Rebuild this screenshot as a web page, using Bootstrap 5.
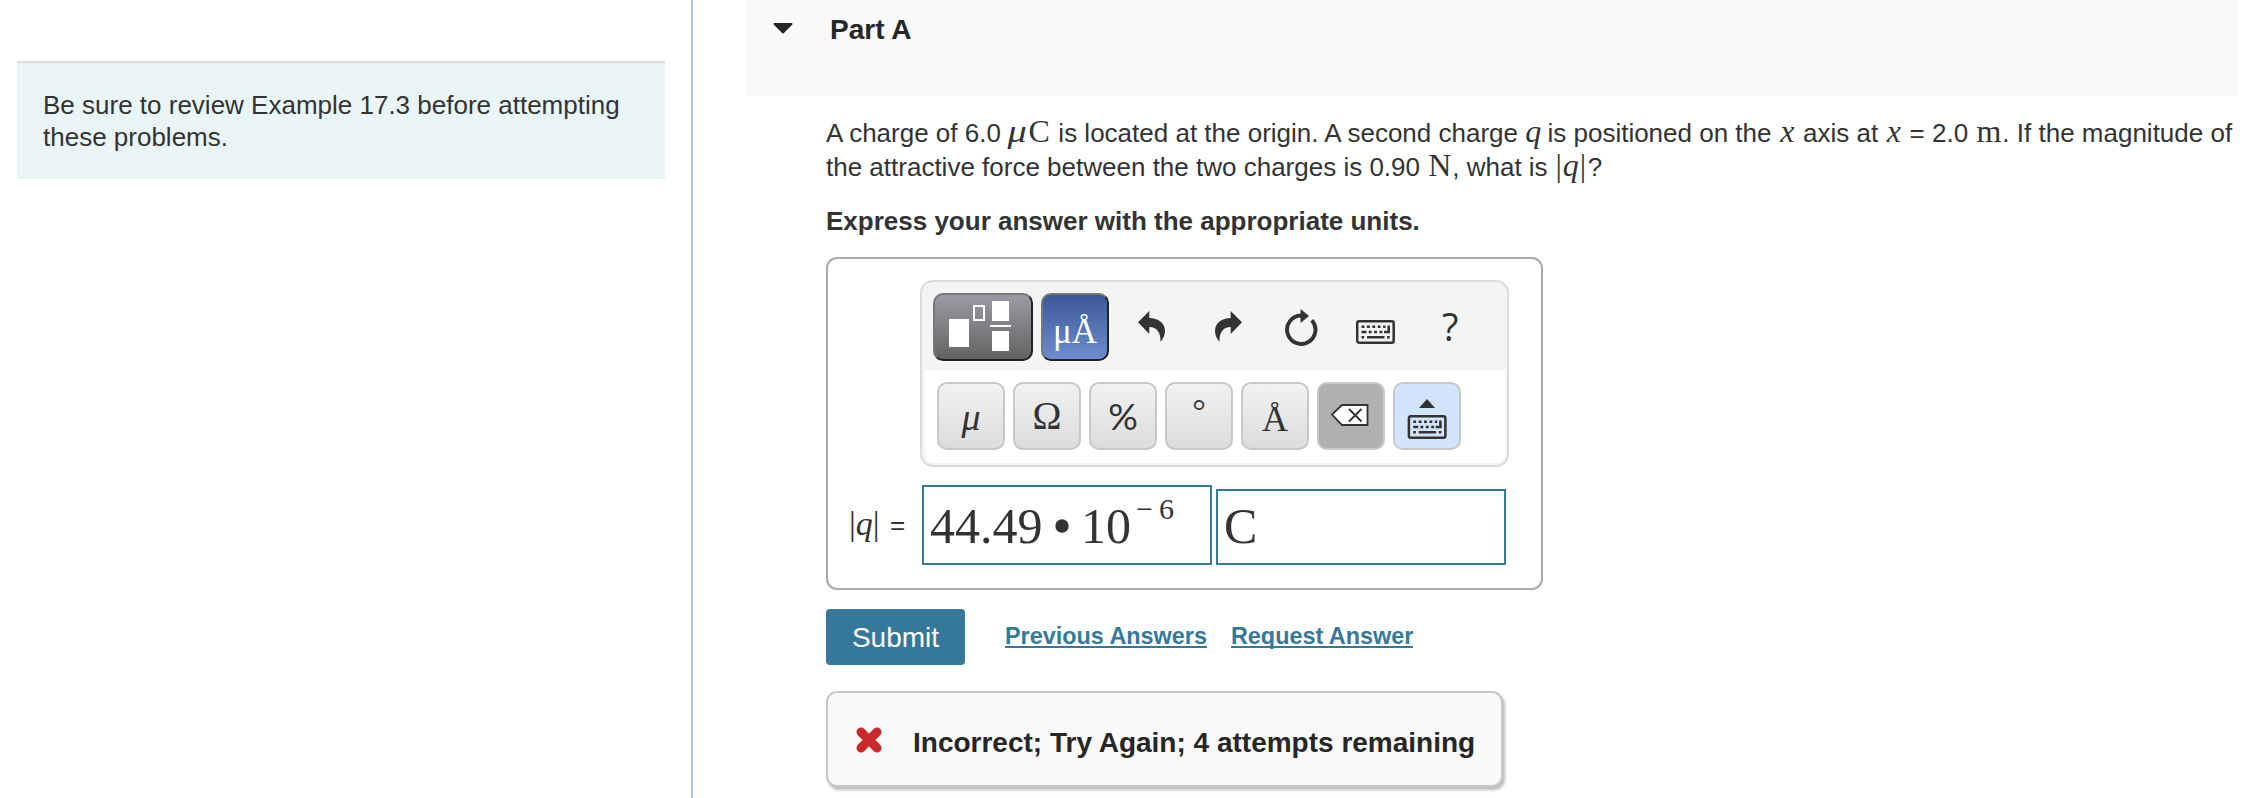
<!DOCTYPE html>
<html lang="en">
<head>
<meta charset="utf-8">
<title>Part A</title>
<link rel="stylesheet" href="https://cdn.jsdelivr.net/npm/bootstrap@5.3.0/dist/css/bootstrap.min.css">
<style>
body{font-family:"Liberation Sans",Arial,sans-serif;font-size:26px;color:#333;background:#fff}
.page{height:798px;overflow:hidden}
.side{width:693px;border-right:2px solid #b9c6d8;padding:61px 26px 0 17px}
.hint{background:#eaf5f8;border-top:2px solid #dedee2;padding:26px 20px 26px 26px;line-height:32px}
.main-col{padding:0 24px 0 52px;min-width:0}
.part-head{height:96px;background:#f9f9f9;padding:8px 0 0 28px;color:#262626}
.part-head h1{font-size:28px;line-height:26px;margin:9px 0 0 37px}
.content{padding:20px 0 0 81px}
.ask{line-height:34px;margin-bottom:20px}
.m{display:inline-block;font-family:"Liberation Serif",serif;font-size:32px;line-height:20px;text-align:center}
.m.i{font-style:italic}
.instr{line-height:34px;margin-bottom:19px}
.answer{width:717px;height:333px;border:2px solid #a9a9a9;border-radius:11px;padding:21px 32px 0 16px}
.pad{width:589px;height:187px;margin-left:76px;border:2px solid #dcdcdc;border-radius:13px;background:#f4f4f4;padding:0 2px 2px 3px}
.tools{height:88px;padding:11px 0 0 8px}
.keys{background:#fff;height:93px;border-radius:0 0 9px 9px;padding:12px 0 0 12px}
.key{width:68px;height:68px;border:2px solid #c8c8c8;border-radius:10px;background:linear-gradient(#f2f2f2,#dcdcdc);font-family:"Liberation Serif",serif;color:#333;padding:0}
.tmpl{width:100px;border-color:#777 #222 #222 #777;background:linear-gradient(#9b9aa4,#636363)}
.units{border-color:#777 #222 #222 #777;background:linear-gradient(#3b5797,#6f8dce);color:#fff}
.ico{height:68px}
.field{width:290px;border:2px solid #357a9c;font-family:"Liberation Serif",serif;font-size:50px;padding-left:6px;white-space:nowrap}
.lbl{width:77px;height:80px;line-height:80px;padding-left:5px}
.send{width:139px;height:56px;background:#36789a;color:#fff;border-radius:4px;font-size:28px;line-height:58px;padding:0;border:0}
.lk{font-size:23.4px;font-weight:700;color:#36789a;line-height:27px;text-decoration:none;border-bottom:2px solid #36789a;height:25px}
.fb{width:677px;height:96px;background:#f9f9f9;border:2px solid #c8c8c8;border-radius:11px;box-shadow:2px 3px 3px #bbb;margin-top:26px;padding-left:28px;color:#262626;font-size:28px}
</style>
<script src="https://cdn.jsdelivr.net/npm/bootstrap@5.3.0/dist/js/bootstrap.bundle.min.js"></script>
</head>
<body>
<svg width="0" height="0" class="position-absolute">
<defs>
<g id="kb"><rect x="1.200" y="1.200" width="36.500" height="21.500" rx="2" fill="none" stroke="#333" stroke-width="2.500"/>
<path fill="none" stroke="#333" stroke-width="2.500" stroke-dasharray="2.900 2.500" d="M5.500 6.800H29.500M12.700 12H26.500"/>
<path fill="none" stroke="#333" stroke-width="2.500" d="M5.500 12h5M28 12h6M5.500 17.300h2.700M11 17.300h17.500M31 17.300h2.700M32.700 5.500v7.500"/></g>
<path id="arr" fill="#333" d="M0 11.300 11.300 0V7C20 7 27 12 27 20 27 24 25 28 22.500 31 23 22 19 16 11.300 16V23Z"/>
</defs></svg>
<div class="page d-flex">
<aside class="side flex-shrink-0"><div class="hint">Be sure to review Example 17.3 before attempting these problems.</div></aside>
<main class="main-col flex-grow-1">
<header class="part-head d-flex align-items-start">
<svg width="20" height="26" class="flex-shrink-0"><path d="M1.500 16h17L10 24.500Z" fill="#262626" stroke="#262626" stroke-width="2" stroke-linejoin="round"/></svg>
<h1 class="fw-bold">Part A</h1>
</header>
<div class="content">
<p class="ask text-nowrap">A charge of 6.0 <span class="m" style="width:43px"><i style="display:inline-block;transform:scaleX(1.2);margin-right:3px">μ</i>C</span> is located at the origin. A second charge <span class="m i" style="width:15px">q</span> is positioned on the <span class="m i" style="width:17px">x</span> axis at <span class="m i" style="width:17px">x</span> = 2.0 <span class="m" style="width:27px">m</span>. If the magnitude of<br>the attractive force between the two charges is 0.90 <span class="m" style="width:25px">N</span>, what is <span class="m" style="width:33px;letter-spacing:1px">|<i>q</i>|</span>?</p>
<p class="instr fw-bold">Express your answer with the appropriate units.</p>
<section class="answer">
<div class="pad">
<div class="tools d-flex">
<button class="key tmpl me-2"><svg class="d-block" width="96" height="64" fill="#fff"><path d="M14 24h20v28H14zM57 6h17v20H57zM57 36h17v20H57zM55 30h21v2H55z"/><path d="M39 11h10v14H39z" fill="none" stroke="#fff" stroke-width="2"/></svg></button>
<button class="key units" style="font-size:35px;line-height:74px"><span class="d-block" style="height:64px">μÅ</span></button>
<svg class="ico" width="27" height="68" style="margin-left:29px"><use href="#arr" y="18"/></svg>
<svg class="ico" width="27" height="68" style="margin-left:50px"><use href="#arr" transform="matrix(-1 0 0 1 27 18)"/></svg>
<svg class="ico" width="33" height="68" style="margin-left:43px"><path d="M26.800 27.200A14.200 14.200 0 1 1 16 22.500" fill="none" stroke="#333" stroke-width="3.900"/><path d="M15.500 16 24 23 15.500 30Z" fill="#333"/></svg>
<svg class="ico" width="39" height="68" style="margin-left:38px"><use href="#kb" y="27"/></svg>
<span style="margin-left:47px;font:38px/67px 'Open Sans',sans-serif">?</span>
</div>
<div class="keys d-flex gap-2">
<button class="key d-flex justify-content-center" style="font-size:38px;line-height:67px"><i>μ</i></button>
<button class="key d-flex justify-content-center" style="font-size:39px;line-height:64px">Ω</button>
<button class="key d-flex justify-content-center" style="font-family:Lato,sans-serif;font-size:37px;line-height:64px">%</button>
<button class="key d-flex justify-content-center" style="font-size:34px;line-height:54px">°</button>
<button class="key d-flex justify-content-center" style="font-size:36px;line-height:70px">Å</button>
<button class="key" style="background:#b0b0b0"><svg class="d-block" width="64" height="64"><path d="M13 30.500 23 21H48.500V41H23Z" fill="#fff" stroke="#333" stroke-width="1.800"/><path d="M30 25 42.500 37.500M42.500 25 30 37.500" stroke="#333" stroke-width="1.800"/></svg></button>
<button class="key" style="background:#d3e5fd"><svg class="d-block" width="64" height="64"><path d="M24 24 32 15 40 24Z" fill="#333"/><use href="#kb" x="12.700" y="31"/></svg></button>
</div>
</div>
<div class="d-flex align-items-end" style="margin-top:18px">
<div class="lbl d-flex"><span style="font:34px/78px 'Liberation Serif',serif;width:41px">|<i>q</i>|</span><span>=</span></div>
<div class="field d-flex" style="height:80px;line-height:78px;margin-left:1px"><span style="width:124px">44.49</span><svg width="16" height="76"><circle cx="8" cy="39" r="6.700" fill="#333"/></svg><span style="width:66px;padding-left:11px">10</span><span style="font-size:30px;line-height:44px">−<span style="margin-left:6px">6</span></span></div>
<div class="field" style="height:76px;line-height:70px;margin-left:4px">C</div>
</div>
</section>
<div class="d-flex align-items-start" style="margin-top:19px">
<button class="send">Submit</button>
<a class="lk" href="#" style="margin:14px 0 0 40px">Previous Answers</a>
<a class="lk" href="#" style="margin:14px 0 0 24px">Request Answer</a>
</div>
<div class="fb d-flex align-items-center fw-bold">
<svg width="26" height="26" class="flex-shrink-0" style="margin-top:1px"><path d="M5 5 21 21M21 5 5 21" stroke="#ca2a2c" stroke-width="9" stroke-linecap="round"/></svg>
<span style="margin-left:31px;margin-top:7px">Incorrect; Try Again; 4 attempts remaining</span>
</div>
</div>
</main>
</div>
</body>
</html>
